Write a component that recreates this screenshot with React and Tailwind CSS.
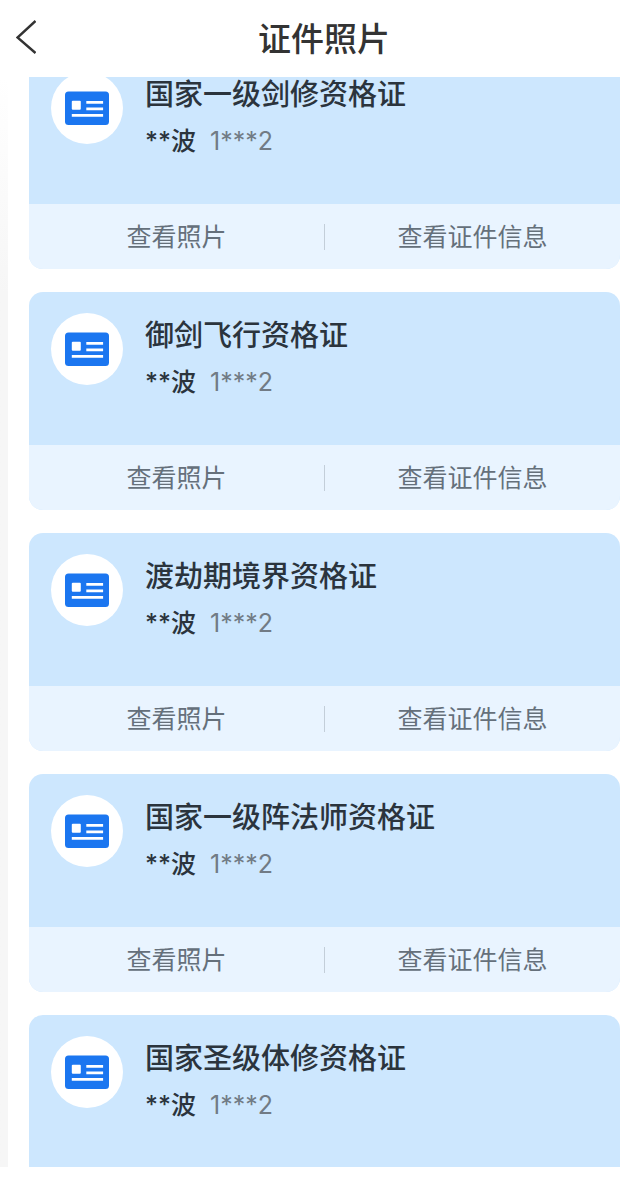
import { useLayoutEffect, useRef } from 'react';

const certificates = [
  { id: 1, title: '国家一级剑修资格证' },
  { id: 2, title: '御剑飞行资格证' },
  { id: 3, title: '渡劫期境界资格证' },
  { id: 4, title: '国家一级阵法师资格证' },
  { id: 5, title: '国家圣级体修资格证' },
];

function IdCardIcon() {
  return (
    <svg className="w-11 h-[34px]" viewBox="0 0 44 34" fill="none" aria-hidden="true">
      <rect y="0.6" width="44" height="33.4" rx="3.5" fill="#1b76f0" />
      <rect x="6.8" y="9.8" width="9" height="9" rx="1" fill="#fff" />
      <path d="M21.3 11.3h16.8M21.3 17.8h16.8M6.8 24.3h31.3" stroke="#fff" strokeWidth="2.8" />
    </svg>
  );
}

function CertificateCard({ title, name, number }) {
  return (
    <article className="shrink-0 rounded-[14px] overflow-hidden bg-[#cde7fe]">
      <div className="flex h-[153px] items-start gap-[22px] px-[22px] pt-[21px]">
        <div className="flex w-[72px] h-[72px] shrink-0 items-center justify-center rounded-full bg-white">
          <IdCardIcon />
        </div>
        <div>
          <h2 className="text-[29px] leading-[46px] font-medium text-[#2b343d]">{title}</h2>
          <p className="flex gap-[14px] text-[25px] leading-[46px]">
            <span className="font-medium text-[#2b343d]">{name}</span>
            <span className="font-normal text-[#717b85]">{number}</span>
          </p>
        </div>
      </div>

      <div className="flex h-[65px] items-center bg-[#e9f4ff] text-[25px] text-[#65707b]">
        <button type="button" className="flex-1 h-full pt-[3px] cursor-pointer">
          查看照片
        </button>
        <span className="w-px h-[26px] bg-[#c3ced9]" />
        <button type="button" className="flex-1 h-full pt-[3px] cursor-pointer">
          查看证件信息
        </button>
      </div>
    </article>
  );
}

export default function App() {
  const listRef = useRef(null);

  // open the list slightly scrolled, with the first card under the header
  useLayoutEffect(() => {
    listRef.current.scrollTop = 48;
  }, []);

  return (
    <div className="flex h-screen flex-col bg-white pb-[15px] font-['Inter','Noto_Sans_CJK_SC',sans-serif]">
      <header className="grid h-[77px] shrink-0 grid-cols-[64px_1fr_56px] items-center">
        <button type="button" aria-label="返回" className="flex h-full items-center pl-4 pb-1 cursor-pointer">
          <svg className="w-5 h-[34px]" viewBox="0 0 20 34" fill="none" aria-hidden="true">
            <path d="M19.5 1L1.5 17.5L19.5 33" stroke="#333" strokeWidth="2.4" />
          </svg>
        </button>
        <h1 className="text-center text-[33px] leading-[46px] font-medium text-[#333]">证件照片</h1>
      </header>

      <div className="flex min-h-0 flex-1">
        <div className="w-2 shrink-0 bg-linear-to-b from-white to-[#f6f6f6] to-20%" />
        <main
          ref={listRef}
          className="flex min-w-0 flex-1 flex-col gap-[23px] overflow-y-auto pt-[22px] pr-5 pb-[22px] pl-[21px] [scrollbar-width:none]"
        >
          {certificates.map((item) => (
            <CertificateCard key={item.id} title={item.title} name="**波" number="1***2" />
          ))}
        </main>
      </div>
    </div>
  );
}
